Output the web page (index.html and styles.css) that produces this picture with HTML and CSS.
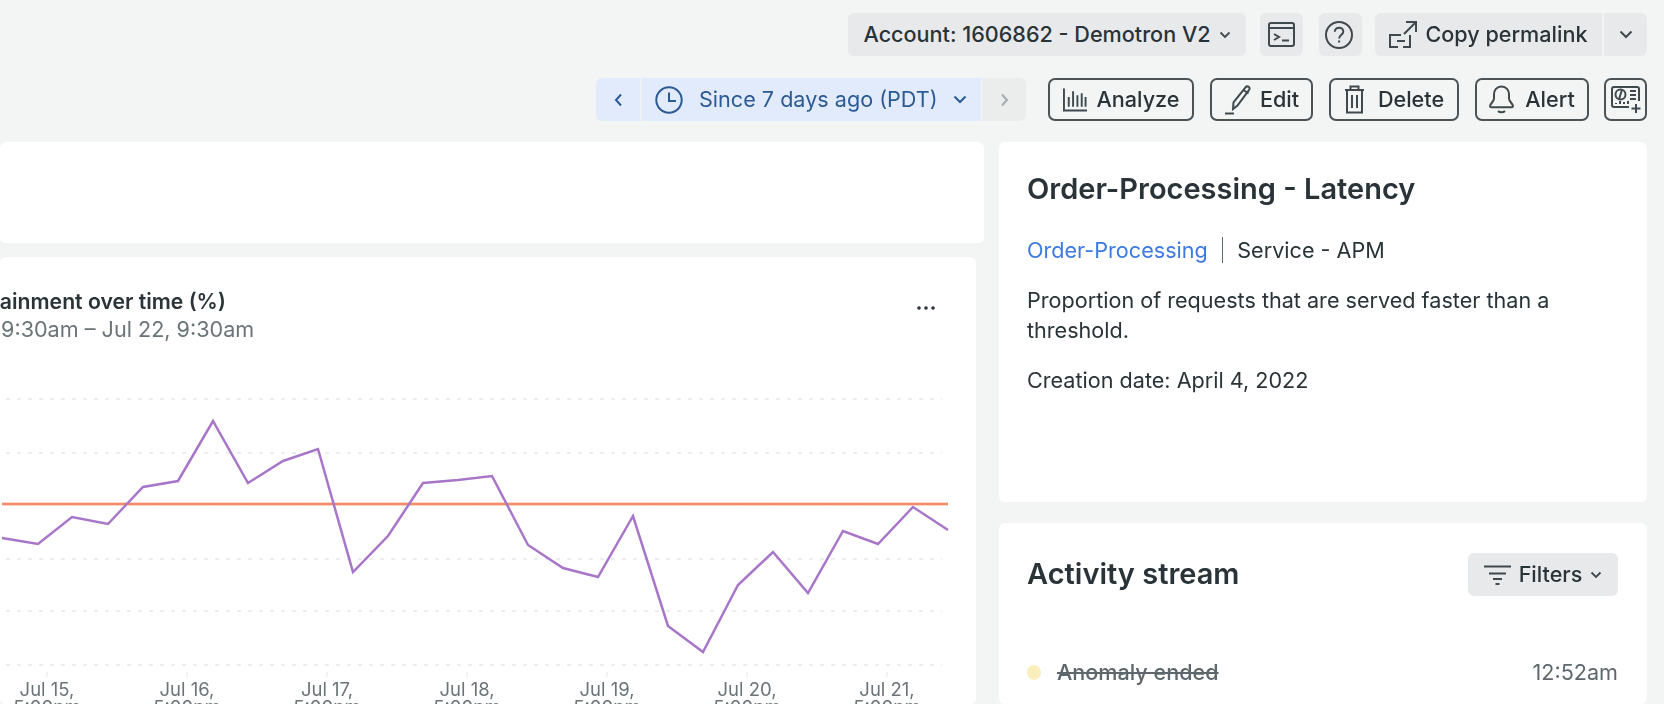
FILE: index.html
```html
<!DOCTYPE html>
<html lang="en">
<head>
<meta charset="utf-8">
<title>Order-Processing - Latency</title>
<link rel="stylesheet" href="styles.css">
</head>
<body>
<header class="toolbar">
  <div class="row row-top">
    <button class="btn btn-account">Account: 1606862 - Demotron V2
      <svg class="chev-sm" viewBox="0 0 12 8"><path d="M1.500 1.500 6 6l4.500-4.500"/></svg>
    </button>
    <button class="btn btn-square">
      <svg class="ico" width="27" height="25" viewBox="0 0 27 25"><rect x="1" y="1" width="25" height="23" rx="2"/><path d="M1 6h25M6 12l5 3-5 3M14 18.500h7"/></svg>
    </button>
    <button class="btn btn-square btn-help">
      <svg class="ico" width="28" height="28" viewBox="0 0 28 28"><circle cx="14" cy="14" r="13"/><path d="M9.800 10.800c0-2.600 2-4.100 4.300-4.100s4.200 1.500 4.200 3.800c0 3.400-4.200 3.500-4.200 6.900"/><path d="M14.100 19.500v2"/></svg>
    </button>
    <div class="split">
      <button class="btn btn-copy">
        <svg class="ico" width="28" height="27" viewBox="0 0 28 27"><path d="M15 13 27 1M17 1h10v10M12 14H1v12h8M14 26h7V14M8 20h8"/></svg>
        Copy permalink
      </button>
      <button class="btn btn-caret">
        <svg class="chev" viewBox="0 0 14 9"><path d="M1.500 1.500 7 7l5.500-5.500"/></svg>
      </button>
    </div>
  </div>
  <div class="row row-bottom">
    <div class="timepicker">
      <button class="tp tp-prev">
        <svg class="chev-v" viewBox="0 0 9 14"><path d="M7 1.500 2 7l5 5.500"/></svg>
      </button>
      <button class="tp tp-main">
        <svg class="ico-blue" width="28" height="28" viewBox="0 0 28 28"><circle cx="14" cy="14" r="12.700"/><path d="M14 6.500V15h7"/></svg>
        <span class="tp-label">Since 7 days ago (PDT)</span>
        <svg class="chev-blue" viewBox="0 0 14 9"><path d="M1.500 1.500 7 7l5.500-5.500"/></svg>
      </button>
      <button class="tp tp-next">
        <svg class="chev-v muted" viewBox="0 0 9 14"><path d="M2 1.500 7 7l-5 5.500"/></svg>
      </button>
    </div>
    <button class="btn-line w-analyze">
      <svg class="ico" width="24" height="25" viewBox="0 0 25 25"><path d="M1 1v23h24M6 10v10M10.500 4v16M15 8v12M19.500 6v14M23.500 10v10"/></svg>
      Analyze
    </button>
    <button class="btn-line w-edit">
      <svg class="ico" width="28" height="30" viewBox="0 0 28 30"><path d="M9 24l.5-6.500L21.500 2.300c.8-1 2.200-1.100 3.200-.4s1.200 2 .4 3L13.500 20.500zM19.500 5l5 3.500M1 28.500h9"/></svg>
      Edit
    </button>
    <button class="btn-line w-delete">
      <svg class="ico" width="21" height="29" viewBox="0 0 21 29"><path d="M1 5h19M6.500 5V1.500h8V5M3 5v22.500h15V5M8 10v13M13 10v13"/></svg>
      Delete
    </button>
    <button class="btn-line w-alert">
      <svg class="ico" width="25" height="29" viewBox="0 0 25 29"><path d="M12.500 1.500c-4.800 0-7.500 3.700-7.500 8v4c0 3-4 5.500-4 7.500 0 .8.600 1.300 1.500 1.300h20c.9 0 1.500-.5 1.500-1.300 0-2-4-4.500-4-7.500v-4c0-4.300-2.700-8-7.500-8zM9 26c1.800 1.800 5.200 1.800 7 0"/></svg>
      Alert
    </button>
    <button class="btn-line w-icon">
      <svg class="ico" width="30" height="28" viewBox="0 0 30 28"><path d="M18 21H3a2 2 0 0 1-2-2V3a2 2 0 0 1 2-2h23a2 2 0 0 1 2 2v12"/><circle cx="9.500" cy="8.500" r="5"/><path d="M11 3.800 8 13.200M19 5h6M19 9h6M19 13h6M5 18v-1M9 18v-3M13 18v-2M17 18v-3M25 18v9M20.500 22.500h9"/></svg>
    </button>
  </div>
</header>

<main class="columns">
  <section class="col-left">
    <div class="card card-blank"></div>
    <div class="card card-chart">
      <div class="chart-head">
        <div class="chart-titles">
          <h2 class="chart-title">SLO attainment over time (%)</h2>
          <p class="chart-sub">Jul 15, 9:30am – Jul 22, 9:30am</p>
        </div>
        <svg class="more" width="18" height="4" viewBox="0 0 18 4"><circle cx="2" cy="2" r="1.800"/><circle cx="9" cy="2" r="1.800"/><circle cx="16" cy="2" r="1.800"/></svg>
      </div>
      <svg class="plot" width="976" height="361" viewBox="0 343 976 361">
        <g class="grid">
          <path d="M6 399H942M6 453H942M6 505H942M6 559H942M6 611H942M6 665H942"/>
        </g>
        <path class="ticks" d="M47 672v5M187 672v5M327 672v5M467 672v5M607 672v5M747 672v5M887 672v5"/>
        <path class="limit-halo" d="M2 504H948"/>
        <path class="limit" d="M2 504H948"/>
        <polyline class="series" points="2,538 38,544 72,517 108,524 143,487 178,481 213,421 248,483 283,461 318,449 353,572 388,536 423,483 458,480 492,476 528,545 563,568 598,577 633,516 668,626 703,652 738,585 773,552 808,593 843,531 878,544 913,507 948,530"/>
        <g class="axis">
          <text x="47" y="696">Jul 15,</text><text x="47" y="714">5:00pm</text>
          <text x="187" y="696">Jul 16,</text><text x="187" y="714">5:00pm</text>
          <text x="327" y="696">Jul 17,</text><text x="327" y="714">5:00pm</text>
          <text x="467" y="696">Jul 18,</text><text x="467" y="714">5:00pm</text>
          <text x="607" y="696">Jul 19,</text><text x="607" y="714">5:00pm</text>
          <text x="747" y="696">Jul 20,</text><text x="747" y="714">5:00pm</text>
          <text x="887" y="696">Jul 21,</text><text x="887" y="714">5:00pm</text>
        </g>
      </svg>
    </div>
  </section>

  <aside class="col-right">
    <div class="card card-info">
      <h1 class="heading">Order-Processing - Latency</h1>
      <div class="meta">
        <a class="link">Order-Processing</a>
        <span class="meta-sep"></span>
        <span>Service - APM</span>
      </div>
      <p class="desc">Proportion of requests that are served faster than a threshold.</p>
      <p class="created">Creation date: April 4, 2022</p>
    </div>
    <div class="card card-activity">
      <div class="activity-head">
        <h2 class="heading heading-activity">Activity stream</h2>
        <button class="btn btn-filters">
          <svg class="ico" width="27" height="20" viewBox="0 0 27 20"><path d="M0 1.500h27M5 8.500h17M9 14h9M11.500 19h4"/></svg>
          Filters
          <svg class="chev-sm" viewBox="0 0 12 8"><path d="M1.500 1.500 6 6l4.500-4.500"/></svg>
        </button>
      </div>
      <div class="event">
        <span class="dot"></span>
        <span class="event-name">Anomaly ended</span>
        <span class="event-time">12:52am</span>
      </div>
    </div>
  </aside>
</main>
</body>
</html>
```

FILE: styles.css
```css
* { box-sizing: border-box; }
html, body { margin: 0; height: 704px; overflow: hidden; }
body {
  background: #f3f5f4;
  color: #293338;
  font-family: Inter, "Noto Sans", sans-serif;
  font-size: 21.600px;
  line-height: 28px;
  filter: blur(.35px);
}
button {
  font: inherit;
  color: inherit;
  border: 0;
  background: none;
  padding: 0 0 2px;
  display: flex;
  align-items: center;
  justify-content: center;
}
button svg { margin-top: 2px; }
svg { display: block; flex: none; }
h1, h2, p { margin: 0; }

.toolbar { padding: 13px 17px 0 0; }
.row { display: flex; justify-content: flex-end; height: 43px; }
.row-top { font-weight: 500; }
.row-bottom { margin-top: 22px; margin-bottom: 21px; font-weight: 500; }

.btn { background: #e8e9ea; border-radius: 6px; height: 43px; }
.btn-account { width: 398px; gap: 8px; margin-right: 14px; }
.btn-square { width: 43px; }
.btn-help { margin: 0 13px 0 16px; padding-right: 3px; }
.split { display: flex; gap: 2px; }
.btn-copy { width: 227px; gap: 8px; border-radius: 6px 0 0 6px; }
.btn-caret { width: 43px; border-radius: 0 6px 6px 0; }

.ico { fill: none; stroke: #3f494e; stroke-width: 2; }
.chev-sm { width: 12px; height: 8px; fill: none; stroke: #3f494e; stroke-width: 1.800; }
.chev { width: 14px; height: 9px; fill: none; stroke: #3f494e; stroke-width: 2; }

.timepicker { display: flex; gap: 1px; margin-right: 22px; font-weight: 400; }
.tp { height: 43px; background: #e2ebfb; color: #2b5a94; }
.tp-prev { width: 44px; border-radius: 6px 0 0 6px; }
.tp-main { width: 340px; padding-left: 14px; justify-content: flex-start; }
.tp-next { width: 44px; background: #ebecec; border-radius: 0 6px 6px 0; }
.tp-label { margin: 0 15px 0 16px; white-space: nowrap; }
.chev-v { width: 9px; height: 14px; fill: none; stroke: #2b5a94; stroke-width: 2; }
.chev-v.muted { stroke: #a6abad; }
.chev-blue { width: 14px; height: 9px; fill: none; stroke: #2b5a94; stroke-width: 2; }
.ico-blue { fill: none; stroke: #2b5a94; stroke-width: 2; }

.btn-line {
  height: 43px;
  border: 2px solid #4b5357;
  border-radius: 7px;
  gap: 10px;
  margin-left: 16px;
}
.w-analyze { width: 146px; margin-left: 0; }
.w-edit { width: 103px; gap: 8px; }
.w-delete { width: 130px; gap: 13px; }
.w-alert { width: 114px; gap: 11px; }
.w-icon { width: 43px; margin-left: 15px; }

.columns { display: grid; grid-template-columns: 984px 648px; column-gap: 15px; }
.col-left, .col-right { display: flex; flex-direction: column; }
.card { background: #fff; border-radius: 6px; }
.card-blank { height: 101px; margin-bottom: 14px; }
.card-chart { width: 976px; height: 447px; overflow: hidden; padding-top: 30px; }

.chart-head { display: flex; justify-content: space-between; padding-right: 41px; }
.chart-title { font-size: 21.200px; font-weight: 600; line-height: 28px; white-space: nowrap; margin-left: -73.500px; }
.chart-sub { color: #6b7478; white-space: nowrap; margin-left: -69px; }
.more { fill: #293338; margin-top: 19px; }

.grid path { fill: none; stroke: #e6e8e9; stroke-width: 1.500; stroke-dasharray: 4 7; }
.ticks { fill: none; stroke: #e3e5e6; stroke-width: 1; }
.limit { fill: none; stroke: #f0754a; stroke-width: 1.500; }
.limit-halo { fill: none; stroke: #f9cdbb; stroke-width: 3.500; }
.series { fill: none; stroke: #a876c9; stroke-width: 2.500; stroke-linejoin: miter; }
.axis text { fill: #6b7478; font-size: 18.500px; text-anchor: middle; }

.card-info { height: 360px; padding: 32px 29px 0 28px; margin-bottom: 21px; }
.heading { font-size: 29px; font-weight: 600; line-height: 30px; }
.heading-activity { padding-bottom: 2px; }
.meta { display: flex; align-items: center; margin-top: 32px; height: 28px; }
.link { color: #3d7ae0; }
.meta-sep { width: 1.500px; height: 26px; background: #5d676c; margin: 0 14px; }
.desc { margin-top: 22px; line-height: 29.500px; }
.created { margin-top: 21px; }

.card-activity { height: 181px; padding: 30px 29px 0 28px; }
.activity-head { display: flex; justify-content: space-between; align-items: center; }
.btn-filters { width: 150px; height: 43px; gap: 8px; font-weight: 500; }
.event { display: flex; align-items: center; margin-top: 62px; }
.dot { width: 14px; height: 15px; border-radius: 50%; background: #fbeebd; margin-right: 16px; }
.event-name { color: #5d676c; font-weight: 500; text-decoration: line-through; flex: 1; }
.event-time { color: #5d676c; }
```
